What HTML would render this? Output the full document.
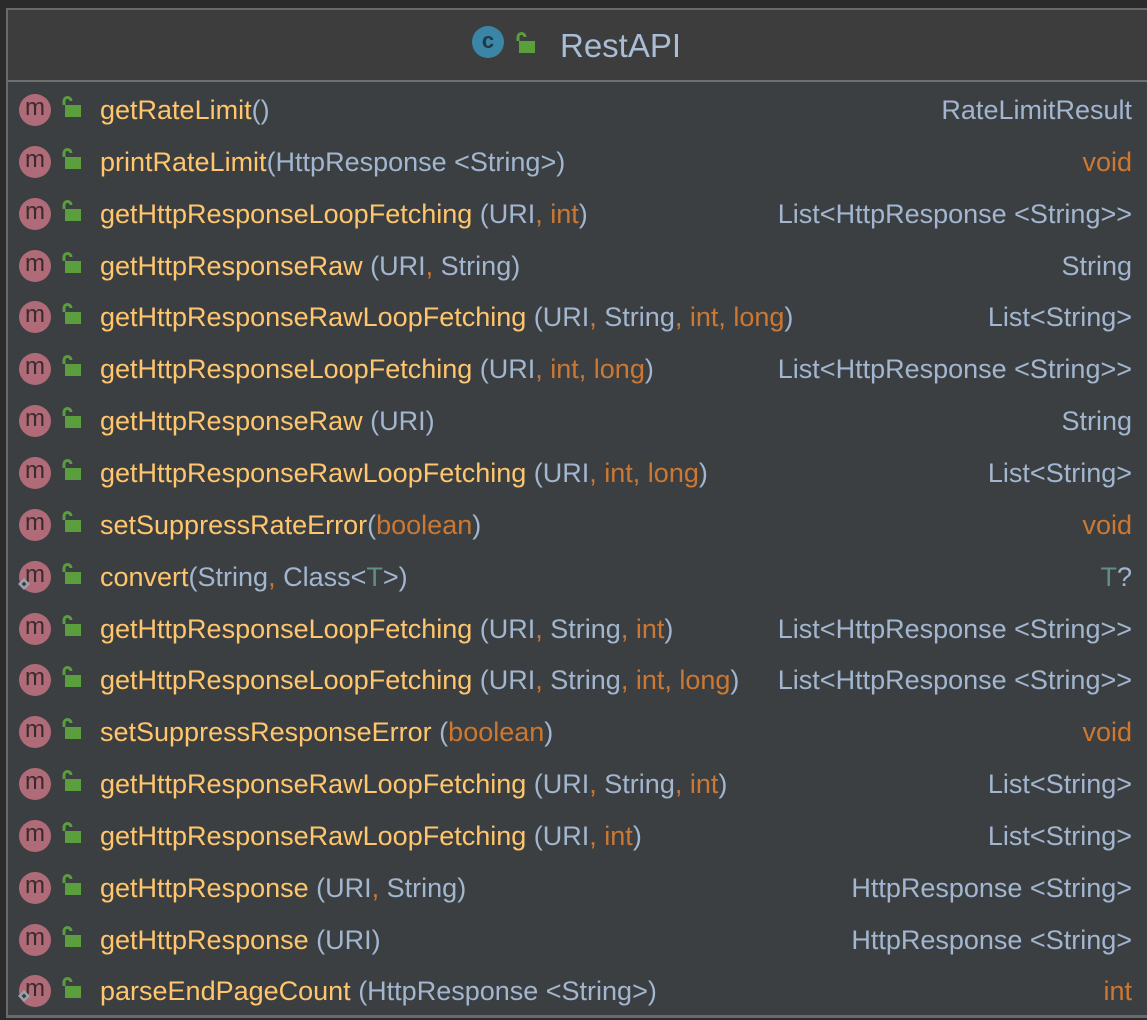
<!DOCTYPE html>
<html><head><style>
body{margin:0;width:1147px;height:1020px;background:#2b2b2b;overflow:hidden;position:relative;font-family:"Liberation Sans",sans-serif;}
.panel{position:absolute;left:6px;top:8px;width:1160px;height:1005px;background:#3c3f41;border-left:2px solid #6a6a6a;border-top:2px solid #6a6a6a;border-bottom:3px solid #6a6a6a;}
.hdr{position:absolute;left:0;top:0;right:0;height:70px;background:#3d3d3d;border-bottom:2px solid #6e6e6e;}
.title{position:absolute;left:552px;top:17px;font-size:33px;color:#a9bdd6;}
.row{position:absolute;left:0;width:1130px;height:52px;line-height:52px;font-size:27px;white-space:nowrap;}
.row .n{position:absolute;left:92px;color:#ffc66d;}
.row .r{position:absolute;right:6px;color:#a2b6d0;}
.p{color:#a2b6d0}.o{color:#cc7832}.g{color:#5f8f88}
.m{position:absolute;left:11px;top:10px;width:32px;height:32px;border-radius:50%;background:#b06b78;color:#3a2a2e;font-size:24px;line-height:27px;text-align:center;}
.lk{position:absolute;left:52px;top:11px;}
</style></head><body>
<div class="panel">
<div class="hdr">
<div style="position:absolute;left:464px;top:16px;width:32px;height:32px;border-radius:50%;background:#3b86a6;color:#1e3a48;font-size:22px;line-height:30px;text-align:center;font-weight:bold">c</div>
<svg style="position:absolute;left:506px;top:21px" width="24" height="24" viewBox="0 0 24 24"><path d="M4 10V6a3.5 3.5 0 0 1 7 0" stroke="#5a9e3e" stroke-width="3" fill="none"/><rect x="5" y="10" width="16" height="12" fill="#5a9e3e"/></svg>
<div class="title">RestAPI</div>
</div>
</div>
<div id="rows"></div>
<script>
const L='<svg class="lk" width="24" height="24" viewBox="0 0 24 24"><path d="M4 10V6a3.5 3.5 0 0 1 7 0" stroke="#5a9e3e" stroke-width="3" fill="none"/><rect x="5" y="10" width="16" height="12" fill="#5a9e3e"/></svg>';
const rows=[
['getRateLimit','<span class=p>()</span>','RateLimitResult'],
['printRateLimit','<span class=p>(HttpResponse &lt;String&gt;)</span>','<span class=o>void</span>'],
['getHttpResponseLoopFetching ','<span class=p>(URI</span><span class=o>, int</span><span class=p>)</span>','List&lt;HttpResponse &lt;String&gt;&gt;'],
['getHttpResponseRaw ','<span class=p>(URI</span><span class=o>,</span><span class=p> String)</span>','String'],
['getHttpResponseRawLoopFetching ','<span class=p>(URI</span><span class=o>,</span><span class=p> String</span><span class=o>, int, long</span><span class=p>)</span>','List&lt;String&gt;'],
['getHttpResponseLoopFetching ','<span class=p>(URI</span><span class=o>, int, long</span><span class=p>)</span>','List&lt;HttpResponse &lt;String&gt;&gt;'],
['getHttpResponseRaw ','<span class=p>(URI)</span>','String'],
['getHttpResponseRawLoopFetching ','<span class=p>(URI</span><span class=o>, int, long</span><span class=p>)</span>','List&lt;String&gt;'],
['setSuppressRateError','<span class=p>(</span><span class=o>boolean</span><span class=p>)</span>','<span class=o>void</span>'],
['convert','<span class=p>(String</span><span class=o>,</span><span class=p> Class&lt;</span><span class=g>T</span><span class=p>&gt;)</span>','<span class=g>T</span>?'],
['getHttpResponseLoopFetching ','<span class=p>(URI</span><span class=o>,</span><span class=p> String</span><span class=o>, int</span><span class=p>)</span>','List&lt;HttpResponse &lt;String&gt;&gt;'],
['getHttpResponseLoopFetching ','<span class=p>(URI</span><span class=o>,</span><span class=p> String</span><span class=o>, int, long</span><span class=p>)</span>','List&lt;HttpResponse &lt;String&gt;&gt;'],
['setSuppressResponseError ','<span class=p>(</span><span class=o>boolean</span><span class=p>)</span>','<span class=o>void</span>'],
['getHttpResponseRawLoopFetching ','<span class=p>(URI</span><span class=o>,</span><span class=p> String</span><span class=o>, int</span><span class=p>)</span>','List&lt;String&gt;'],
['getHttpResponseRawLoopFetching ','<span class=p>(URI</span><span class=o>, int</span><span class=p>)</span>','List&lt;String&gt;'],
['getHttpResponse ','<span class=p>(URI</span><span class=o>,</span><span class=p> String)</span>','HttpResponse &lt;String&gt;'],
['getHttpResponse ','<span class=p>(URI)</span>','HttpResponse &lt;String&gt;'],
['parseEndPageCount ','<span class=p>(HttpResponse &lt;String&gt;)</span>','<span class=o>int</span>']];
let h='';
rows.forEach((r,i)=>{
 const top=84+51.85*i;
 let extra='';
 if(i==9||i==17) extra='<svg style="position:absolute;left:9px;top:'+(i==9?26:24)+'px" width="14" height="14" viewBox="0 0 14 14"><path d="M7 1L13 7L7 13L1 7Z" fill="#9aa3ad"/><path d="M7 4.5L9.5 7L7 9.5L4.5 7Z" fill="#3c3f41"/></svg>';
 h+='<div class="row" style="top:'+top+'px;left:8px"><div class="m">m</div>'+extra+L+'<span class="n">'+r[0]+r[1]+'</span><span class="r">'+r[2]+'</span></div>';
});
document.getElementById('rows').innerHTML=h;
</script>
</body></html>
